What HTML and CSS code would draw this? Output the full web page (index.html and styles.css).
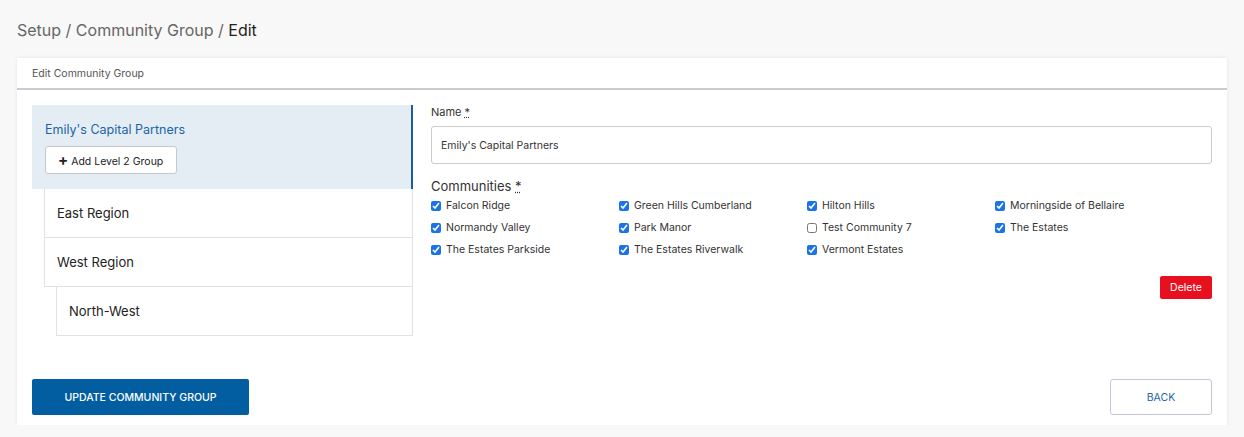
FILE: index.html
```html
<!DOCTYPE html>
<html lang="en">
<head>
    <meta charset="UTF-8">
    <meta name="viewport" content="width=device-width, initial-scale=1.0">
    <title>Edit Community Group</title>
    <link rel="stylesheet" href="styles.css">
</head>
<body>
    <h2 class="breadcrumb">Setup / Community Group / <span>Edit</span></h2>

    <div class="card">
        <div class="card-header">Edit Community Group</div>

        <div class="card-body">
            <div class="tree">
                <div class="tree-item selected">
                    <div class="tree-title">Emily's Capital Partners</div>
                    <button class="btn-add"><span class="plus">+</span> Add Level 2 Group</button>
                </div>
                <div class="tree-item level2">East Region</div>
                <div class="tree-item level2 joined">West Region</div>
                <div class="tree-item level3 joined">North-West</div>
            </div>

            <div class="form">
                <label class="label">Name <abbr title="required">*</abbr></label>
                <div class="input">Emily's Capital Partners</div>

                <label class="label big">Communities <abbr title="required">*</abbr></label>
                <div class="checks">
                    <label><input type="checkbox" checked> Falcon Ridge</label>
                    <label><input type="checkbox" checked> Green Hills Cumberland</label>
                    <label><input type="checkbox" checked> Hilton Hills</label>
                    <label><input type="checkbox" checked> Morningside of Bellaire</label>
                    <label><input type="checkbox" checked> Normandy Valley</label>
                    <label><input type="checkbox" checked> Park Manor</label>
                    <label><input type="checkbox"> Test Community 7</label>
                    <label><input type="checkbox" checked> The Estates</label>
                    <label><input type="checkbox" checked> The Estates Parkside</label>
                    <label><input type="checkbox" checked> The Estates Riverwalk</label>
                    <label><input type="checkbox" checked> Vermont Estates</label>
                </div>

                <div class="delete-row">
                    <button class="btn-delete">Delete</button>
                </div>
            </div>
        </div>

        <div class="card-footer">
            <button class="btn-update">UPDATE COMMUNITY GROUP</button>
            <button class="btn-back">BACK</button>
        </div>
    </div>
</body>
</html>
```

FILE: styles.css
```css
body {
    font-family: Inter, "Open Sans", sans-serif;
    background-color: #f8f8f8;
    margin: 0;
    padding: 0 17px;
    color: #333;
}

.breadcrumb {
    margin: 0;
    padding: 20px 0 0;
    height: 58px;
    box-sizing: border-box;
    font-size: 16px;
    font-weight: 400;
    color: #666;
}

.breadcrumb span {
    color: #222;
}

.card {
    background-color: #fff;
    width: 1210px;
    box-shadow: 0 0 4px rgba(0, 0, 0, 0.08);
}

.card-header {
    height: 32px;
    padding: 9px 15px 0;
    box-sizing: border-box;
    font-size: 10.5px;
    color: #555;
    border-bottom: 2px solid #cbc9d2;
}

.card-body {
    display: flex;
    padding: 15px 15px 0;
}

.tree {
    width: 381px;
    flex-shrink: 0;
}

.tree-item {
    height: 49px;
    box-sizing: border-box;
    border: 1px solid #e2e2e2;
    display: flex;
    align-items: center;
    font-size: 13px;
    color: #222;
}

.tree-item.selected {
    height: 84px;
    flex-direction: column;
    align-items: flex-start;
    justify-content: flex-start;
    border: 0;
    border-right: 2px solid #1c5d99;
    background-color: #e4ecf4;
    padding: 17px 13px 0;
}

.tree-title {
    color: #1a64a6;
    font-size: 12.5px;
    margin-bottom: 9px;
}

.btn-add {
    font-family: inherit;
    font-size: 10.5px;
    color: #222;
    background-color: #fff;
    border: 1px solid #c5c5cc;
    border-radius: 3px;
    height: 28px;
    padding: 0 13px 0 12px;
}

.btn-add .plus {
    font-size: 15px;
    font-weight: 700;
    line-height: 1;
}

.tree-item.level2 {
    margin-left: 12px;
    padding-left: 12px;
    border-top: 0;
}

.tree-item.level3 {
    margin-left: 24px;
    padding-left: 12px;
    border-top: 0;
}

.form {
    flex: 1;
    margin-left: 18px;
}

.label {
    display: block;
    font-size: 11px;
    color: #333;
    margin-bottom: 7px;
}

.label.big {
    font-size: 13px;
    margin-top: 14px;
    margin-bottom: 0;
}

abbr {
    text-decoration: underline dotted;
}

.input {
    height: 38px;
    box-sizing: border-box;
    border: 1px solid #ccc;
    border-radius: 3px;
    padding: 0 9px;
    display: flex;
    align-items: center;
    font-size: 10.5px;
    color: #333;
}

.checks {
    display: grid;
    grid-template-columns: repeat(4, 188px);
    grid-auto-rows: 22px;
    font-size: 10.5px;
    color: #333;
}

.checks label {
    display: flex;
    align-items: center;
    gap: 5px;
}

.checks input {
    width: 10px;
    height: 10px;
    margin: 1px 0 0;
    accent-color: #1a73e8;
}

.delete-row {
    display: flex;
    justify-content: flex-end;
    margin-top: 16px;
}

.btn-delete {
    font-family: inherit;
    font-size: 10.5px;
    color: #fff;
    background-color: #e8101f;
    border: 0;
    border-radius: 2px;
    width: 52px;
    height: 23px;
}

.card-footer {
    display: flex;
    justify-content: space-between;
    padding: 43px 15px 10px;
}

.btn-update {
    font-family: inherit;
    font-size: 10.5px;
    font-weight: 500;
    color: #fff;
    background-color: #035ea1;
    border: 0;
    border-radius: 2px;
    width: 217px;
    height: 36px;
}

.btn-back {
    font-family: inherit;
    font-size: 10.5px;
    color: #2466a4;
    background-color: #fff;
    border: 1px solid #c6c4d8;
    border-radius: 3px;
    width: 102px;
    height: 36px;
}
```
